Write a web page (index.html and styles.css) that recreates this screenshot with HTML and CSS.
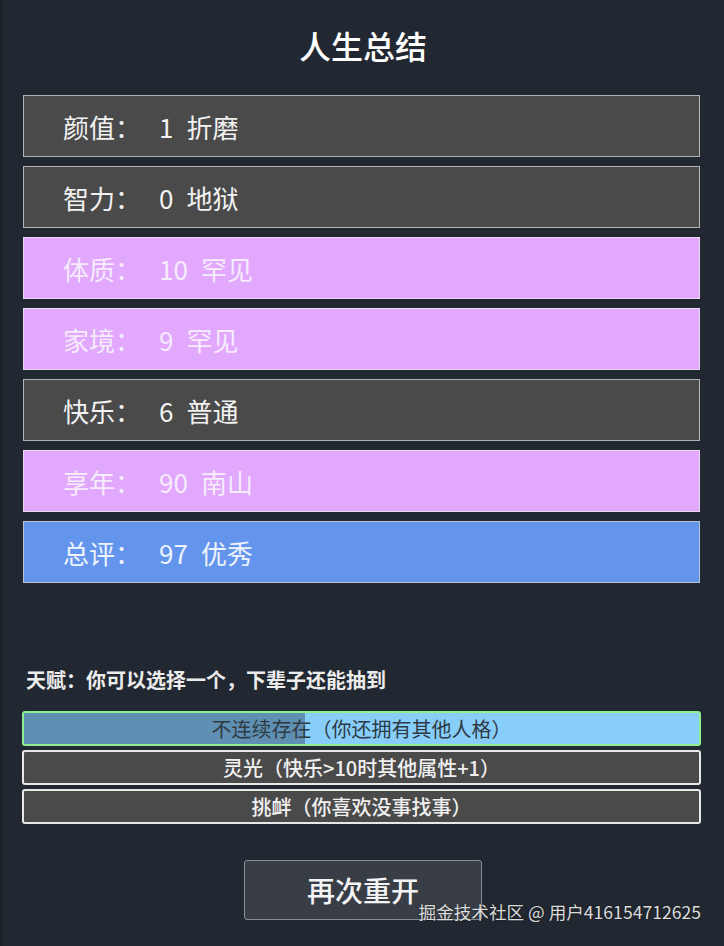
FILE: index.html
```html
<!DOCTYPE html>
<html lang="zh-CN">
<head>
<meta charset="utf-8">
<title>人生总结</title>
<link rel="stylesheet" href="styles.css">
</head>
<body>
<div class="page">
  <h1 class="title">人生总结</h1>
  <div class="rows">
    <div class="row gray"><span class="k">颜值：</span><span class="v">1</span><span class="g">折磨</span></div>
    <div class="row gray"><span class="k">智力：</span><span class="v">0</span><span class="g">地狱</span></div>
    <div class="row pink"><span class="k">体质：</span><span class="v">10</span><span class="g">罕见</span></div>
    <div class="row pink"><span class="k">家境：</span><span class="v">9</span><span class="g">罕见</span></div>
    <div class="row gray"><span class="k">快乐：</span><span class="v">6</span><span class="g">普通</span></div>
    <div class="row pink"><span class="k">享年：</span><span class="v">90</span><span class="g">南山</span></div>
    <div class="row blue"><span class="k">总评：</span><span class="v">97</span><span class="g">优秀</span></div>
  </div>
  <div class="talent-head">天赋：你可以选择一个，下辈子还能抽到</div>
  <ul class="talents">
    <li class="talent selected"><span class="progress" style="width:41.7%"></span><span class="tt">不连续存在（你还拥有其他人格）</span></li>
    <li class="talent"><span class="tt">灵光（快乐&gt;10时其他属性+1）</span></li>
    <li class="talent"><span class="tt">挑衅（你喜欢没事找事）</span></li>
  </ul>
  <div class="actions"><button class="restart">再次重开</button></div>
  <div class="watermark">掘金技术社区 @ 用户416154712625</div>
</div>
</body>
</html>
```
FILE: styles.css
```css
html, body {
  margin: 0;
  padding: 0;
  background: #222831;
  height: 100%;
}
body {
  font-family: "Noto Sans CJK SC", "Noto Sans", sans-serif;
  color: #f0f0f0;
  border-left: 2px solid #1c2027;
  box-sizing: border-box;
}
.page {
  position: relative;
  padding: 24px 24px 0 21px;
  height: 946px;
  box-sizing: border-box;
}
.title {
  margin: 0;
  font-size: 32px;
  line-height: 42px;
  font-weight: 500;
  text-align: center;
  color: #ffffff;
  padding-left: 3px;
}
.rows {
  margin-top: 29px;
  display: flex;
  flex-direction: column;
  gap: 9px;
}
.row {
  height: 62px;
  box-sizing: border-box;
  border: 1px solid #b4b4b4;
  display: flex;
  align-items: center;
  padding-left: 39px;
  font-size: 26px;
  color: #f2f2f2;
}
.row.gray { background: #4a4a4a; }
.row.pink { background: #e1a8fe; border-color: #e8d8f0; color: #f6ecfb; }
.row.blue { background: #6495ed; border-color: #b8c4d8; color: #eef3fc; }
.k { width: 78px; }
.v { margin-left: 18px; }
.g { margin-left: 13px; }
.talent-head {
  margin-top: 85px;
  padding-left: 3px;
  font-size: 20px;
  line-height: 24px;
  font-weight: bold;
  color: #ececec;
}
.talents {
  list-style: none;
  margin: 19px 0 0 -1px;
  padding: 0;
  display: flex;
  flex-direction: column;
  gap: 4px;
  width: 679px;
}
.talent {
  position: relative;
  height: 35px;
  box-sizing: border-box;
  border: 2px solid #e8e8e8;
  border-radius: 3px;
  background: #4a4a4a;
  display: flex;
  align-items: center;
  justify-content: center;
  font-size: 20px;
  font-weight: 500;
  color: #f0f0f0;
  overflow: hidden;
}
.talent.selected {
  background: #87cefa;
  border-color: #90ee90;
  color: #2e3a44;
  font-weight: normal;
}
.progress {
  position: absolute;
  left: 0;
  top: 0;
  bottom: 0;
  background: rgba(40, 60, 80, 0.42);
}
.tt { position: relative; }
.actions {
  margin-top: 36px;
  display: flex;
  justify-content: center;
  padding-left: 3px;
}
.restart {
  width: 238px;
  height: 60px;
  background: #393e46;
  border: 1px solid #8a8e96;
  border-radius: 3px;
  color: #f4f4f4;
  font-family: "Noto Sans CJK SC", "Noto Sans", sans-serif;
  font-size: 28px;
  font-weight: 500;
  padding: 0;
}
.watermark {
  position: absolute;
  right: 23px;
  top: 900px;
  font-size: 17.6px;
  line-height: 24px;
  color: #dcdcdc;
  text-shadow: 0 0 2px rgba(0,0,0,0.5);
}
```
